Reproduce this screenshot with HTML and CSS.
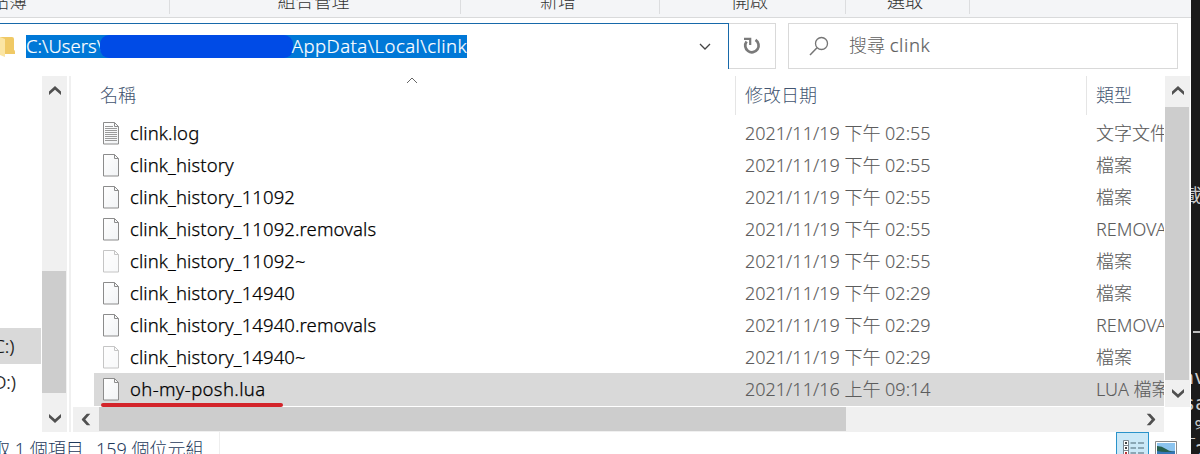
FILE: index.html
```
<!DOCTYPE html>
<html lang="zh-Hant">
<head>
<meta charset="utf-8">
<title>clink</title>
<link rel="stylesheet" href="styles.css">
</head>
<body>
<svg class="defs" width="0" height="0">
  <defs>
    <linearGradient id="paper" x1="0" y1="0" x2="1" y2="1"><stop offset="0" stop-color="#fff"/><stop offset="1" stop-color="#f1f3f5"/></linearGradient>
    <symbol id="page" viewBox="0 0 18 23"><path d="M1.500.500h11l4 4v17.500h-15z" fill="url(#paper)" stroke="#8c8c8c"/><path d="M12.500.500v4h4" fill="none" stroke="#8c8c8c"/></symbol>
    <symbol id="log" viewBox="0 0 18 23"><use href="#page"/><path d="M3 4.500h8M3 6.500h12M3 8.500h12M3 10.500h12M3 12.500h12M3 14.500h12M3 16.500h12M3 18.500h12" stroke="#9a9a9a"/></symbol>
    <symbol id="chev" viewBox="0 0 12 9"><path d="M0 5.500L6 0l6 5.500V9L6 3.800 0 9z" fill="#505050"/></symbol>
  </defs>
</svg>
<div class="screen">
  <div class="window">
    <div class="ribbon">
      <div class="group g1"><span>剪貼簿</span></div>
      <div class="group g2"><span>組合管理</span></div>
      <div class="group g3"><span>新增</span></div>
      <div class="group g4"><span>開啟</span></div>
      <div class="group g5"><span>選取</span></div>
    </div>
    <div class="toolbar">
      <div class="address">
        <svg class="folder" width="15" height="22" viewBox="0 0 15 22"><path d="M0 1h12q2 0 2 2v11q1 0 1 2v2H0z" fill="#f0c965"/><path d="M0 1l5 2v18L0 19z" fill="#fbe5a3"/></svg>
        <div class="path"><span class="seg a">C:\Users\</span><span class="mask"></span><span class="seg b">AppData\Local\clink</span></div>
        <svg class="drop" width="12" height="8" viewBox="0 0 12 8"><path d="M1 1l5 5 5-5" fill="none" stroke="#444" stroke-width="1.300"/></svg>
      </div>
      <div class="refresh"><svg width="18" height="18" viewBox="0 0 18 18"><path d="M3.600 4.500A6.700 6.700 0 1 0 12.500 2.900" fill="none" stroke="#7a7a7a" stroke-width="2.700"/><path d="M1 1.800h6.200V8" fill="none" stroke="#7a7a7a" stroke-width="2.200"/></svg></div>
      <div class="search"><svg width="20" height="20" viewBox="0 0 20 20"><circle cx="12.500" cy="7.500" r="6" fill="none" stroke="#757575" stroke-width="1.300"/><path d="M8 11.800L1 19" stroke="#757575" stroke-width="1.500"/></svg><span>搜尋 <span class="term">clink</span></span></div>
    </div>
    <div class="main">
      <div class="nav"><div class="drive on"><span>(C:)</span></div><div class="drive"><span>(D:)</span></div></div>
      <div class="vbar left"><div class="btn"><svg width="12" height="9"><use href="#chev"/></svg></div><div class="track"><div class="thumb"></div></div><div class="btn"><svg class="down" width="12" height="9"><use href="#chev"/></svg></div></div>
      <div class="content">
        <div class="top">
          <div class="files">
            <div class="head"><div class="c1">名稱<svg class="sort" width="12" height="7" viewBox="0 0 12 7"><path d="M1 6l5-5 5 5" fill="none" stroke="#666"/></svg></div><div class="c2">修改日期</div><div class="c3">類型</div></div>
            <div class="row"><svg class="ico"><use href="#log"/></svg><span class="name">clink.log</span><span class="date">2021/11/19 下午 02:55</span><span class="type">文字文件</span></div>
            <div class="row"><svg class="ico"><use href="#page"/></svg><span class="name">clink_history</span><span class="date">2021/11/19 下午 02:55</span><span class="type">檔案</span></div>
            <div class="row"><svg class="ico"><use href="#page"/></svg><span class="name">clink_history_11092</span><span class="date">2021/11/19 下午 02:55</span><span class="type">檔案</span></div>
            <div class="row"><svg class="ico"><use href="#page"/></svg><span class="name">clink_history_11092.removals</span><span class="date">2021/11/19 下午 02:55</span><span class="type">REMOVALS 檔案</span></div>
            <div class="row"><svg class="ico dim"><use href="#page"/></svg><span class="name">clink_history_11092~</span><span class="date">2021/11/19 下午 02:55</span><span class="type">檔案</span></div>
            <div class="row"><svg class="ico"><use href="#page"/></svg><span class="name">clink_history_14940</span><span class="date">2021/11/19 下午 02:29</span><span class="type">檔案</span></div>
            <div class="row"><svg class="ico"><use href="#page"/></svg><span class="name">clink_history_14940.removals</span><span class="date">2021/11/19 下午 02:29</span><span class="type">REMOVALS 檔案</span></div>
            <div class="row"><svg class="ico dim"><use href="#page"/></svg><span class="name">clink_history_14940~</span><span class="date">2021/11/19 下午 02:29</span><span class="type">檔案</span></div>
            <div class="row sel"><svg class="ico"><use href="#page"/></svg><span class="name">oh-my-posh.lua</span><span class="date">2021/11/16 上午 09:14</span><span class="type">LUA 檔案</span><i class="mark"></i></div>
          </div>
          <div class="vbar right"><div class="btn"><svg width="12" height="9"><use href="#chev"/></svg></div><div class="track"><div class="thumb"></div></div><div class="btn"><svg class="down" width="12" height="9"><use href="#chev"/></svg></div></div>
        </div>
        <div class="hbar"><div class="btn"><svg class="lt" width="12" height="9"><use href="#chev"/></svg></div><div class="track"><div class="thumb"></div></div><div class="btn"><svg class="rt" width="12" height="9"><use href="#chev"/></svg></div></div>
      </div>
    </div>
    <div class="status">
      <span class="picked">已選取 1 個項目</span><span class="bytes">159 個位元組</span>
      <div class="views">
        <div class="details"><svg width="22" height="24" viewBox="0 0 22 24"><path d="M.5.500h5v23h-5zM.5 5.500h5M.5 10.500h5M.5 15.500h5" fill="#fff" stroke="#7b8790"/><path d="M2 3h2M2 8h2" stroke="#444" stroke-width="2"/><path d="M2 13h2" stroke="#b33" stroke-width="2"/><path d="M7.500 3h5.500m2 0h6M7.500 8h5.500m2 0h6M7.500 13h5.500m2 0h6" stroke="#4c6675" stroke-width="1.200"/></svg></div>
        <svg class="pic" width="22" height="18" viewBox="0 0 22 18"><path d="M.5.500h21v17H.5z" fill="#fff" stroke="#8a8a8a"/><path d="M2 2h18v14H2z" fill="#8cc4ef"/><path d="M2 5q5 0 9 3t9 2v3H2z" fill="#27604d"/><path d="M2 10q9 2 18 0v6H2z" fill="#3578b8"/></svg>
      </div>
    </div>
  </div>
  <div class="terminal"><span class="t1">載</span><span class="t2"></span><span class="t3">av</span><span class="t4">sa</span><span class="t5">_%</span><span class="t6">2</span></div>
</div>
</body>
</html>
```
FILE: styles.css
```
* { box-sizing: border-box; }
body { margin: 0; font: 300 18px "Noto Sans", "Noto Sans CJK TC", sans-serif; color: #111; }
svg { display: block; flex: none; }
.defs { position: absolute; }
.screen { display: flex; width: 1200px; height: 454px; overflow: hidden; background: #fff; }
.window { width: 1191px; height: 454px; display: flex; flex-direction: column; flex: none; }
.ribbon { display: flex; height: 18px; background: #f4f5f7; border-bottom: 1px solid #d9dadb; color: #333; }
.group { height: 14px; border-right: 1px solid #dcdddf; display: flex; justify-content: center; line-height: 26px; }
.group span { margin-top: -12px; white-space: nowrap; }
.g1 { width: 170px; justify-content: flex-start; }
.g1 span { margin-left: -27px; }
.g2 { width: 291px; padding-right: 3px; }
.g3 { width: 199px; padding-right: 4px; }
.g4 { width: 186px; padding-right: 5px; }
.g5 { width: 124px; padding-right: 5px; }
.toolbar { display: flex; height: 58px; padding-top: 5px; }
.address { width: 729px; height: 46px; border-top: 1px solid #1769aa; border-right: 1px solid #1769aa; display: flex; align-items: center; }
.path { display: flex; margin-left: 11px; width: 441px; height: 23px; background: #0078d7; color: #fff; line-height: 22px; white-space: nowrap; font-size: 18.5px; -webkit-text-stroke: .2px; }
.a { width: 74px; }
.mask { width: 193px; height: 23px; border-radius: 9px; background: #004be6; position: relative; }
.b { margin-left: -1px; letter-spacing: .45px; position: relative; }
.drop { margin-left: 232px; }
.refresh { width: 47px; height: 46px; border: 1px solid #d9d9d9; border-left: 0; display: grid; place-items: center; }
.search { width: 390px; height: 46px; margin-left: 12px; border: 1px solid #d9d9d9; display: flex; align-items: center; padding-left: 20px; gap: 20px; color: #606060; }
.search > span { margin-top: -5px; }
.term { font-size: 18.5px; letter-spacing: .6px; -webkit-text-stroke: .2px; }
.main { display: flex; height: 356px; }
.nav { width: 42px; padding-top: 252px; }
.drive { width: 41px; height: 36px; line-height: 35px; overflow: hidden; font-size: 18.5px; -webkit-text-stroke: .2px; }
.drive span { display: block; margin-left: -12px; }
.on { background: #d9d9d9; }
.vbar { width: 25px; background: #f0f0f0; display: flex; flex-direction: column; }
.vbar .btn { height: 30px; display: grid; place-items: center; padding-bottom: 1px; }
.vbar .track { flex: 1; }
.thumb { background: #cdcdcd; }
.down { transform: rotate(180deg); }
.left .thumb { width: 24px; height: 122px; margin-top: 165px; }
.left .btn:last-child { height: 26px; }
.right .track { padding-top: 1px; }
.right .thumb { width: 24px; height: 273px; }
.right .btn:last-child { height: 27px; }
.content { margin-left: 2px; border-left: 2px solid #f0f0f0; padding-left: 2px; width: 1122px; }
.top { display: flex; height: 331px; }
.files { width: 1091px; margin-right: 1px; overflow: hidden; padding-left: 21px; }
.head { display: flex; height: 39px; line-height: 38px; color: #435570; }
.c1 { width: 642px; padding-left: 6px; border-right: 1px solid #e5e5e5; position: relative; }
.sort { position: absolute; left: 312px; top: 1px; }
.c2 { width: 351px; padding-left: 9px; border-right: 1px solid #e5e5e5; }
.c3 { padding-left: 9px; }
.row { display: flex; align-items: center; height: 32px; line-height: 32px; white-space: nowrap; color: #5c5c5c; position: relative; }
.row span { flex: none; height: 32px; }
.head + .row { margin-top: 2px; }
.ico { width: 18px; height: 23px; margin-left: 8px; }
.dim { opacity: .5; }
.row .name { width: 615px; margin-left: 10px; color: #000; font-size: 18.5px; letter-spacing: .1px; -webkit-text-stroke: .25px; }
.row .date, .row .type { -webkit-text-stroke: .1px; }
.date { width: 351px; }
.sel { height: 33px; line-height: 30px; background: #d9d9d9; }
.sel .name { letter-spacing: .35px; }
.mark { position: absolute; left: 7px; top: 30px; width: 182px; height: 4px; border-radius: 2px; background: #d3242a; }
.hbar { display: flex; width: 1091px; height: 25px; background: #f0f0f0; }
.hbar .btn { width: 26px; display: grid; place-items: center; }
.hbar .track { flex: 1; }
.hbar .thumb { width: 747px; height: 24px; }
.lt { transform: rotate(-90deg); }
.rt { transform: rotate(90deg); }
.status { display: flex; height: 22px; line-height: 34px; color: #1e395b; overflow: hidden; white-space: nowrap; }
.picked { margin-left: -44px; width: 140px; }
.bytes { width: 124px; border-right: 1px solid #eee; }
.views { display: flex; margin-left: 896px; }
.details { width: 33px; height: 34px; border: 1px solid #2a93ca; background: #cbe8f7; padding: 7px 0 0 6px; }
.pic { margin: 9px 0 0 6px; }
.terminal { position: relative; width: 9px; background: #1b1b1b; color: #ccc; font: 20px "DejaVu Sans Mono", "Noto Sans CJK TC", monospace; overflow: hidden; }
.terminal span { position: absolute; line-height: 24px; white-space: nowrap; }
.terminal .t1 { left: -7px; top: 184px; font-size: 18px; }
.terminal .t2 { left: 2px; top: 331px; width: 7px; height: 2px; background: #bbb; }
.t3 { left: -9px; top: 365px; }
.t4 { left: -8px; top: 391px; }
.t5 { left: -8px; top: 415px; }
.t6 { left: 4px; top: 439px; }
```
